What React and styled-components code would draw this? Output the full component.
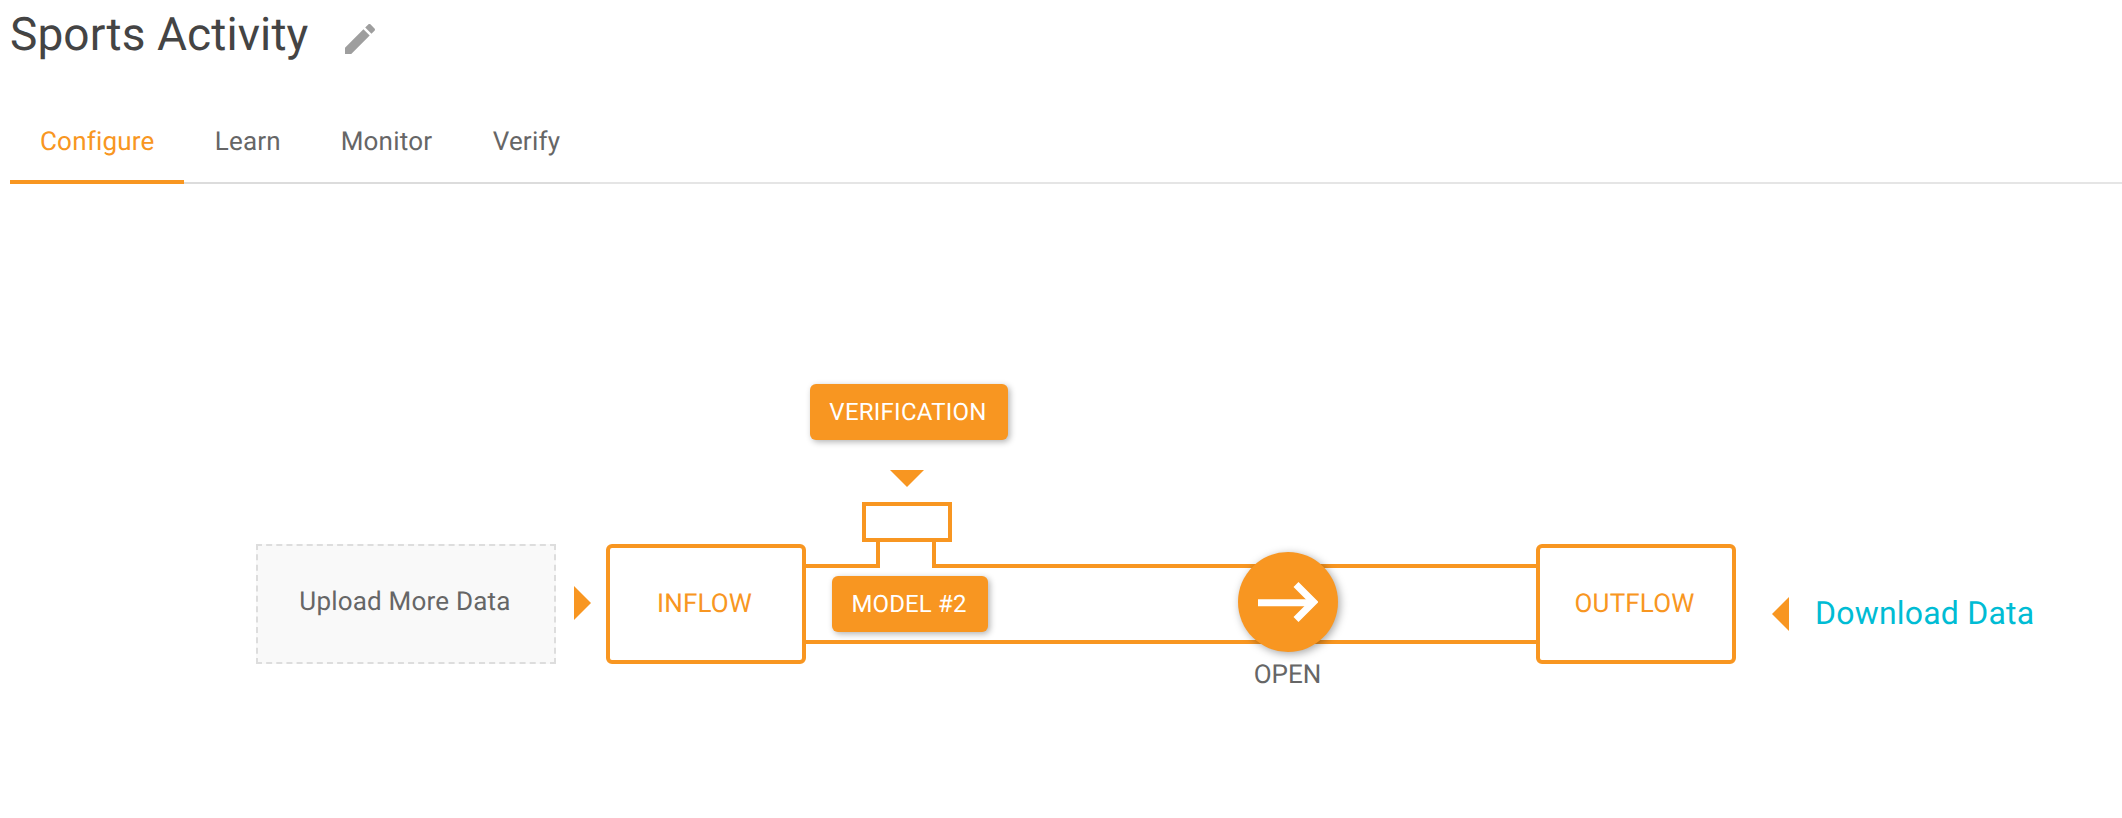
import React from "react";
import styled, { createGlobalStyle } from "styled-components";

const ORANGE = "#f89621";

const GlobalStyle = createGlobalStyle`
  *, *::before, *::after { box-sizing: border-box; }
  body {
    margin: 0;
    background: #fff;
    color: #666;
    font-family: Roboto, "Liberation Sans", sans-serif;
    -webkit-font-smoothing: antialiased;
    text-rendering: geometricPrecision;
  }
`;

const Page = styled.main`
  width: 100%;
  height: 818px;
  padding-left: 10px;
  overflow: hidden;
`;

const Header = styled.header`
  display: flex;
  align-items: center;
  height: 70px;
`;

const Title = styled.h1`
  margin: 0;
  width: 330px;
  font-size: 46px;
  font-weight: 400;
  line-height: 70px;
  letter-spacing: 0.1px;
  color: #444;
  white-space: nowrap;
`;

const PencilIcon = styled.svg`
  width: 40px;
  height: 40px;
  margin-top: 7px;
  fill: #9e9e9e;
`;

const TabBar = styled.nav`
  display: flex;
  align-items: flex-end;
  height: 114px;
  border-bottom: 2px solid #e5e5e5;
`;

const Tab = styled.a`
  display: block;
  height: 82px;
  width: ${(p) => p.$width}px;
  margin-bottom: -2px;
  padding: 0 0 0 ${(p) => (p.$active ? 30 : 30.7)}px;
  font-size: 26px;
  line-height: 80px;
  letter-spacing: 0.2px;
  white-space: nowrap;
  color: ${(p) => (p.$active ? ORANGE : "#666")};
  box-shadow: inset 0 ${(p) => (p.$active ? "-4px" : "-2px")} 0
    ${(p) => (p.$active ? ORANGE : "#dcdcdc")};
`;

const Flow = styled.section`
  display: flex;
  align-items: flex-start;
  padding: 360px 0 0 246px;
`;

const UploadBox = styled.div`
  flex: none;
  width: 300px;
  height: 120px;
  padding-right: 2px;
  border: 2px dashed #ddd;
  background: #f9f9f9;
  font-size: 26px;
  line-height: 112px;
  letter-spacing: 0.2px;
  text-align: center;
  white-space: nowrap;
`;

const Pointer = styled.svg`
  display: block;
  flex: none;
  fill: ${ORANGE};
`;

const InPointer = styled(Pointer)`
  margin: 42px 15px 0 18px;
`;

const OutPointer = styled(Pointer)`
  margin: 53px 26px 0 36px;
`;

const Tank = styled.div`
  flex: none;
  width: 200px;
  height: 120px;
  border: 4px solid ${ORANGE};
  border-radius: 6px;
  background: #fff;
  color: ${ORANGE};
  font-size: 26px;
  line-height: 112px;
  letter-spacing: 0.15px;
  text-align: center;
  padding-right: 3px;
`;

const Pipe = styled.div`
  position: relative;
  flex: none;
  width: 730px;
  height: 80px;
  margin-top: 20px;
  border: solid ${ORANGE};
  border-width: 4px 0;
`;

const Verifier = styled.div`
  position: absolute;
  left: 4px;
  top: -184px;
  width: 198px;
  display: flex;
  flex-direction: column;
  align-items: center;
`;

const Chip = styled.div`
  width: ${(p) => p.$width}px;
  height: 56px;
  padding-right: 2px;
  border-radius: 6px;
  background: ${ORANGE};
  box-shadow: 2px 2px 6px rgba(0, 0, 0, 0.3);
  color: #fff;
  font-size: 24px;
  line-height: 56px;
  letter-spacing: ${(p) => p.$spacing}px;
  text-align: center;
  white-space: nowrap;
`;

const DownPointer = styled(Pointer)`
  margin: 30px 4px 15px 0;
`;

const ValveCap = styled.div`
  width: 90px;
  height: 40px;
  margin-right: 4px;
  border: 4px solid ${ORANGE};
  background: #fff;
`;

const ValveNeck = styled.svg`
  display: block;
  margin-right: 6px;
`;

const Model = styled.div`
  position: absolute;
  left: 26px;
  top: 8px;
`;

const Gate = styled.div`
  position: absolute;
  left: 432px;
  top: -16px;
  width: 100px;
  text-align: center;
`;

const GateButton = styled.div`
  display: flex;
  align-items: center;
  justify-content: center;
  width: 100px;
  height: 100px;
  border-radius: 50%;
  background: ${ORANGE};
  box-shadow: 2px 2px 8px rgba(0, 0, 0, 0.35);
`;

const GateLabel = styled.div`
  margin-top: 7px;
  margin-left: -1px;
  font-size: 26px;
  line-height: 32px;
`;

const Download = styled.a`
  margin-top: 49px;
  font-size: 32px;
  line-height: 40px;
  letter-spacing: 0.2px;
  color: #00bcd4;
  white-space: nowrap;
`;

const TABS = [
  { label: "Configure", width: 174, active: true },
  { label: "Learn", width: 126 },
  { label: "Monitor", width: 152 },
  { label: "Verify", width: 128 },
];

export default function App() {
  return (
    <Page>
      <GlobalStyle />
      <Header>
        <Title>Sports Activity</Title>
        <PencilIcon viewBox="0 0 24 24">
          <path d="M3 17.25V21h3.75L17.81 9.94l-3.75-3.75L3 17.25zM20.71 7.04c.39-.39.39-1.02 0-1.41l-2.34-2.34c-.39-.39-1.02-.39-1.41 0l-1.83 1.83 3.75 3.75 1.83-1.83z" />
        </PencilIcon>
      </Header>
      <TabBar>
        {TABS.map((t) => (
          <Tab key={t.label} $width={t.width} $active={t.active}>
            {t.label}
          </Tab>
        ))}
      </TabBar>
      <Flow>
        <UploadBox>Upload More Data</UploadBox>
        <InPointer width="17" height="34">
          <path d="M0 0L17 17L0 34Z" />
        </InPointer>
        <Tank>INFLOW</Tank>
        <Pipe>
          <Verifier>
            <Chip $width={198} $spacing={0.25}>VERIFICATION</Chip>
            <DownPointer width="34" height="17">
              <path d="M0 0H34L17 17Z" />
            </DownPointer>
            <ValveCap />
            <ValveNeck width="60" height="26">
              <path d="M4 0H56V26H4Z" fill="#fff" />
              <path d="M0 0H4V23L1 26H0ZM56 0H60V26H59L56 23Z" fill={ORANGE} />
            </ValveNeck>
          </Verifier>
          <Model>
            <Chip $width={156} $spacing={0.15}>MODEL #2</Chip>
          </Model>
          <Gate>
            <GateButton>
              <svg width="60" height="40" fill="none" stroke="#fff">
                <path d="M0 20.8H54" strokeWidth="7" />
                <path d="M38 2.5L55.5 20L38 37.5" strokeWidth="7" />
              </svg>
            </GateButton>
            <GateLabel>OPEN</GateLabel>
          </Gate>
        </Pipe>
        <Tank>OUTFLOW</Tank>
        <OutPointer width="17" height="34">
          <path d="M17 0L0 17L17 34Z" />
        </OutPointer>
        <Download>Download Data</Download>
      </Flow>
    </Page>
  );
}
